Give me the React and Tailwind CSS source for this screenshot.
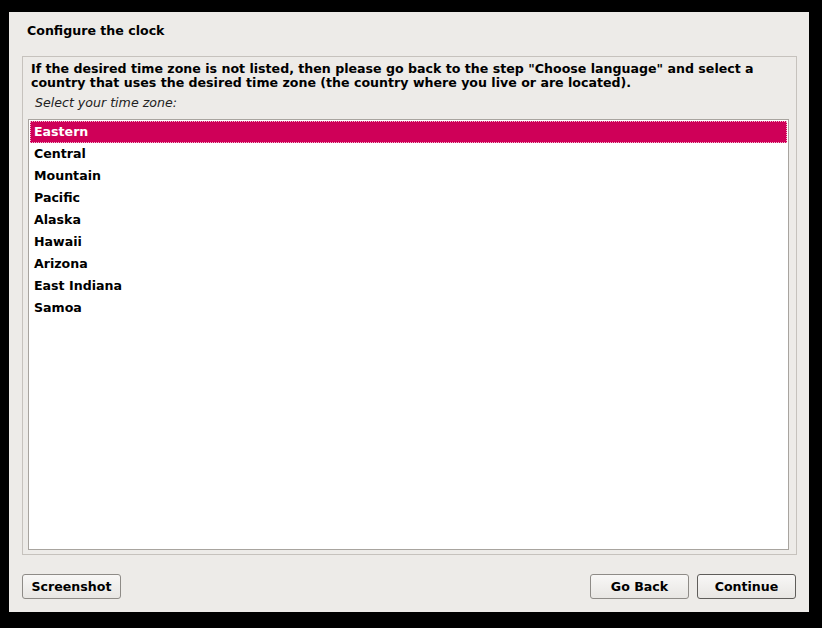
export default function App() {
  const zones = ["Eastern", "Central", "Mountain", "Pacific", "Alaska", "Hawaii", "Arizona", "East Indiana", "Samoa"];
  const font = { fontFamily: '"DejaVu Sans", sans-serif' };
  return (
    <div className="w-[822px] h-[628px] bg-black pt-[12px] pl-[9px] text-[#000]" style={font}>
      <div className="w-[800px] h-[600px] bg-[#edebe8] flex flex-col">
        <div className="pl-[18px] pt-[10px] h-[44px] text-[12.6px] font-bold leading-[18px]">Configure the clock</div>
        <div className="ml-[13px] w-[775px] h-[499px] border border-[#c6c2bd] flex flex-col pl-[5px] pr-[7px] pb-[4px]">
          <div className="pt-[5px] pl-[3px] text-[12.6px] font-bold leading-[14px]">
            <div>If the desired time zone is not listed, then please go back to the step "Choose language" and select a</div>
            <div>country that uses the desired time zone (the country where you live or are located).</div>
          </div>
          <div className="pl-[7px] pt-[5px] h-[29px] text-[12.6px] italic leading-[16px] text-[#222]">Select your time zone:</div>
          <div className="flex-1 bg-white border border-[#a8a49f] p-[1px]">
            {zones.map((z, i) =>
              i === 0 ? (
                <div key={z} className="h-[22px] bg-[#cf0058] border border-dotted border-[#f3b5cc] pl-[3px] text-white text-[12.6px] font-bold leading-[19px]">{z}</div>
              ) : (
                <div key={z} className="h-[22px] pl-[4px] text-[12.6px] font-bold leading-[21px]">{z}</div>
              )
            )}
          </div>
        </div>
        <div className="flex justify-between px-[13px] pt-[19px]">
          <button className="w-[99px] h-[25px] rounded-[3px] border border-[#8e8b87] bg-gradient-to-b from-[#f8f7f6] to-[#e8e6e3] text-[12.6px] font-bold leading-[23px]">Screenshot</button>
          <div className="flex gap-[8px]">
            <button className="w-[99px] h-[25px] rounded-[3px] border border-[#8e8b87] bg-gradient-to-b from-[#f8f7f6] to-[#e8e6e3] text-[12.6px] font-bold leading-[23px]">Go Back</button>
            <button className="w-[99px] h-[25px] rounded-[3px] border border-[#5f5d5a] bg-gradient-to-b from-[#f8f7f6] to-[#e8e6e3] text-[12.6px] font-bold leading-[23px]">Continue</button>
          </div>
        </div>
      </div>
    </div>
  );
}
